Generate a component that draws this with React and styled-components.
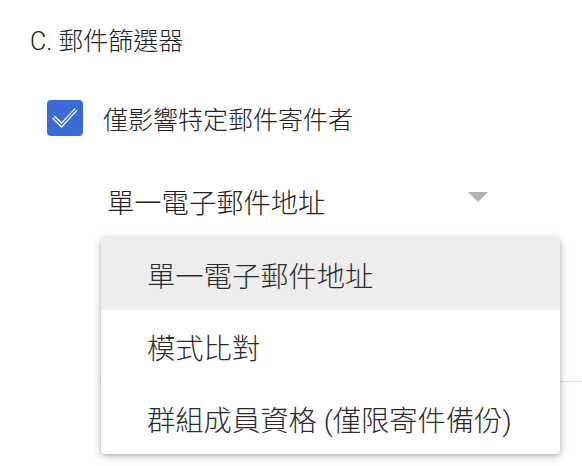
import React from 'react';
import styled, {createGlobalStyle, css} from 'styled-components';

const GlobalStyle = createGlobalStyle`
    body {
        margin: 0;
        background: #fff;
        font-family: Roboto, "Noto Sans CJK TC", sans-serif;
        font-weight: 300;
        color: #212121;
    }
`

const Page = styled.div`
    width: 582px;
    height: 466px;
    overflow: hidden;
    padding-left: 30px;
    box-sizing: border-box;
`

const Title = styled.div`
    height: 84px;
    line-height: 84px;
    font-size: 25px;
`

const CheckRow = styled.label`
    display: flex;
    align-items: center;
    gap: 20px;
    margin-top: 16px;
    padding-left: 17px;
    height: 36px;
    font-size: 25px;
`

const Box = styled.span`
    width: 36px;
    height: 36px;
    border-radius: 4px;
    background: #3a6bd6;
    display: flex;
    align-items: center;
    justify-content: center;
`

const SelectWrap = styled.div`
    position: relative;
    margin-top: 43px;
    margin-left: 77px;
    width: 385px;
`

const SelectBox = styled.div`
    display: flex;
    align-items: center;
    justify-content: space-between;
    height: 44px;
    font-size: 27.3px;
`

const Arrow = styled.span`
    width: 0;
    height: 0;
    border-left: 10.5px solid transparent;
    border-right: 10.5px solid transparent;
    border-top: 10px solid #b0b0b0;
    margin-right: 4px;
    margin-top: -8px;
`

const Menu = styled.ul`
    position: absolute;
    left: -6px;
    top: 59px;
    width: 459px;
    margin: 0;
    padding: 0;
    list-style: none;
    background: #fff;
    border-radius: 4px;
    box-shadow: 0 2px 8px rgba(0, 0, 0, 0.28), 0 1px 3px rgba(0, 0, 0, 0.12);
    overflow: hidden;
    z-index: 2;
`

const Item = styled.li`
    height: 72px;
    display: flex;
    align-items: center;
    padding-left: 46px;
    font-size: 28.3px;
    color: #2b2b2b;
    ${props => props.active && css`
        background: #ededed;
    `}
`

const Divider = styled.hr`
    margin: 158px 0 0 70px;
    border: none;
    border-top: 1px solid #e0e0e0;
`

function CheckMark() {
    return (
        <svg width="36" height="36" viewBox="0 0 36 36">
            <path d="M6.5 17 L14.5 25 L29 9.5" fill="none" stroke="#fff" strokeWidth="4" strokeLinejoin="miter" />
            <path d="M6.5 17 L14.5 25 L29 9.5" fill="none" stroke="#3a6bd6" strokeWidth="1.4" strokeLinejoin="miter" />
        </svg>
    );
}

const options = ['單一電子郵件地址', '模式比對', '群組成員資格 (僅限寄件備份)'];

export default function App() {
    return (
        <Page>
            <GlobalStyle />
            <Title>C. 郵件篩選器</Title>
            <CheckRow>
                <Box><CheckMark /></Box>
                僅影響特定郵件寄件者
            </CheckRow>
            <SelectWrap>
                <SelectBox>
                    <span>{options[0]}</span>
                    <Arrow />
                </SelectBox>
                <Menu>
                    {options.map((o, i) => (
                        <Item key={o} active={i === 0}>{o}</Item>
                    ))}
                </Menu>
            </SelectWrap>
            <Divider />
        </Page>
    );
}
